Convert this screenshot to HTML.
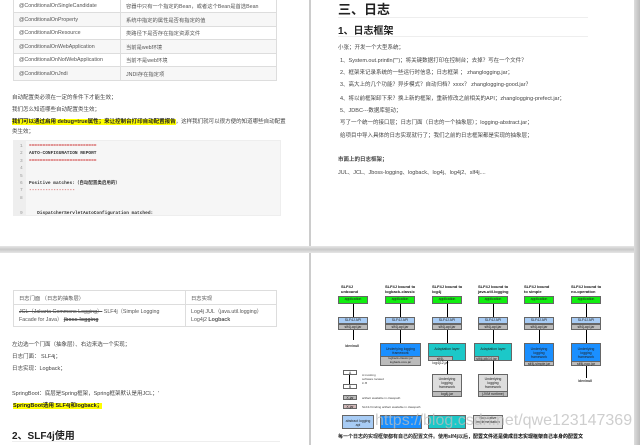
<!DOCTYPE html>
<html><head><meta charset="utf-8"><style>
*{margin:0;padding:0;box-sizing:border-box}
body{width:640px;height:445px;background:#fff;position:relative;overflow:hidden;font-family:"Liberation Sans","Noto Sans CJK SC",sans-serif;color:#333}
.a{position:absolute;white-space:nowrap}
.t{font-size:5.5px;color:#444}
table{border-collapse:collapse;position:absolute;font-size:5.3px;color:#555}
td{border:1px solid #ddd;padding:0 5px}
.hl{background:#ff0}
.box{position:absolute;font-size:3.5px;text-align:center;color:#222;border:1px solid #666;line-height:1.2}
.g{background:#1e1}
.lb{background:#a8ccf5}
.gr{background:#bbb}
.db{background:#1a8fff}
.cy{background:#1cc8c8}
.lg{background:#ddd}
.ar{position:absolute;width:1px;background:#000}
.ti{position:absolute;font-size:4px;font-weight:bold;line-height:5px;color:#111}
</style></head><body>
<div class="a" style="left:309px;top:0;width:2px;height:247px;background:#ccc"></div>
<div class="a" style="left:309px;top:252px;width:2px;height:193px;background:#ccc"></div>
<div class="a" style="left:0;top:246px;width:640px;height:7px;background:linear-gradient(#e6e6e6,#c9c9c9,#e6e6e6)"></div>
<div class="a" style="left:634px;top:0;width:6px;height:445px;background:linear-gradient(90deg,#ddd,#bbb)"></div>

<table style="left:13px;top:-1px;width:264px">
<tr style="height:13px"><td style="width:107px">@ConditionalOnSingleCandidate</td><td>容器中只有一个指定的Bean，或者这个Bean是首选Bean</td></tr>
<tr style="height:14px;background:#f7f7f7"><td>@ConditionalOnProperty</td><td>系统中指定的属性是否有指定的值</td></tr>
<tr style="height:13px"><td>@ConditionalOnResource</td><td>类路径下是否存在指定资源文件</td></tr>
<tr style="height:14px;background:#f7f7f7"><td>@ConditionalOnWebApplication</td><td>当前是web环境</td></tr>
<tr style="height:13px"><td>@ConditionalOnNotWebApplication</td><td>当前不是web环境</td></tr>
<tr style="height:14px;background:#f7f7f7"><td>@ConditionalOnJndi</td><td>JNDI存在指定项</td></tr>
</table>
<div class="a t" style="left:12px;top:93px">自动配置类必须在一定的条件下才能生效；</div>
<div class="a t" style="left:12px;top:105px">我们怎么知道哪些自动配置类生效；</div>
<div class="a t" style="left:12px;top:117px"><b class="hl" style="color:#222">我们可以通过启用 debug=true属性；来让控制台打印自动配置报告</b>，这样我们就可以很方便的知道哪些自动配置</div>
<div class="a t" style="left:12px;top:127px">类生效；</div>
<div class="a" style="left:13px;top:140px;width:268px;height:76px;background:#f6f6f6;border:1px solid #eee"></div>
<div class="a" style="left:14px;top:141px;width:12px;height:75px;background:#eee"></div>
<div class="a" style="left:20px;top:143px;font:4.5px/7.4px 'Liberation Mono',monospace;color:#999;white-space:pre">1
2
3
4
5
6
7
8

9</div>
<div class="a" style="left:29px;top:143px;font:bold 4.5px/7.4px 'Liberation Mono','Noto Sans CJK SC',monospace;color:#333;white-space:pre"><span style="color:#c33">=========================</span>
AUTO-CONFIGURATION REPORT
<span style="color:#c33">=========================</span>


Positive matches:（自动配置类启用的）
<span style="color:#c33">-----------------</span>


   DispatcherServletAutoConfiguration matched:</div>

<div class="a" style="left:338px;top:-1px;font-size:13px;font-weight:bold;color:#222">三、日志</div>
<div class="a" style="left:338px;top:17px;width:250px;height:1px;background:#eee"></div>
<div class="a" style="left:338px;top:22px;font-size:10px;font-weight:bold;color:#222">1、日志框架</div>
<div class="a" style="left:338px;top:36px;width:250px;height:1px;background:#eee"></div>
<div class="a t" style="left:338px;top:43px">小张；开发一个大型系统；</div>
<div class="a t" style="left:340px;top:56px">1、System.out.println("")；将关键数据打印在控制台；去掉？写在一个文件？</div>
<div class="a t" style="left:340px;top:68px">2、框架来记录系统的一些运行时信息；日志框架 ； zhanglogging.jar；</div>
<div class="a t" style="left:340px;top:80px">3、高大上的几个功能？异步模式？自动归档？xxxx？ zhanglogging-good.jar？</div>
<div class="a t" style="left:340px;top:94px">4、将以前框架卸下来？换上新的框架，重新修改之前相关的API；zhanglogging-prefect.jar；</div>
<div class="a t" style="left:340px;top:106px">5、JDBC---数据库驱动；</div>
<div class="a t" style="left:340px;top:118px">写了一个统一的接口层；日志门面（日志的一个抽象层）；logging-abstract.jar；</div>
<div class="a t" style="left:340px;top:131px">给项目中导入具体的日志实现就行了；我们之前的日志框架都是实现的抽象层；</div>
<div class="a t" style="left:338px;top:155px;font-weight:bold">市面上的日志框架；</div>
<div class="a t" style="left:338px;top:168px">JUL、JCL、Jboss-logging、logback、log4j、log4j2、slf4j....</div>

<table style="left:13px;top:290px;width:264px">
<tr style="height:14px"><td style="width:172px">日志门面 （日志的抽象层）</td><td>日志实现</td></tr>
<tr style="height:22px"><td style="line-height:8px"><s>JCL（Jakarta Commons Logging）</s> SLF4j（Simple Logging<br>Facade for Java） <s><b>jboss-logging</b></s></td><td style="line-height:8px">Log4j JUL（java.util.logging）<br>Log4j2 <b>Logback</b></td></tr>
</table>
<div class="a t" style="left:12px;top:340px">左边选一个门面（抽象层）、右边来选一个实现；</div>
<div class="a t" style="left:12px;top:352px">日志门面： SLF4j；</div>
<div class="a t" style="left:12px;top:364px">日志实现：Logback；</div>
<div class="a t" style="left:12px;top:389px">SpringBoot：底层是Spring框架，Spring框架默认是用JCL；'</div>
<div class="a t" style="left:13px;top:401px"><b class="hl" style="color:#222">SpringBoot选用 SLF4j和logback；</b></div>
<div class="a" style="left:12px;top:427px;font-size:10px;font-weight:bold;color:#222">2、SLF4j使用</div>
<div class="a" style="left:12px;top:441px;width:268px;height:1px;background:#eee"></div>

<div class="ti" style="left:341px;top:284px">SLF4J<br>unbound</div>
<div class="ti" style="left:385px;top:284px">SLF4J bound to<br>logback-classic</div>
<div class="ti" style="left:432px;top:284px">SLF4J bound to<br>log4j</div>
<div class="ti" style="left:478px;top:284px">SLF4J bound to<br>java.util.logging</div>
<div class="ti" style="left:524px;top:284px">SLF4J bound<br>to simple</div>
<div class="ti" style="left:571px;top:284px">SLF4J bound to<br>no-operation</div>

<div class="box g" style="left:338px;top:296px;width:30px;height:8px">application</div>
<div class="box g" style="left:385px;top:296px;width:30px;height:8px">application</div>
<div class="box g" style="left:432px;top:296px;width:30px;height:8px">application</div>
<div class="box g" style="left:478px;top:296px;width:30px;height:8px">application</div>
<div class="box g" style="left:524px;top:296px;width:30px;height:8px">application</div>
<div class="box g" style="left:571px;top:296px;width:30px;height:8px">application</div>

<div class="ar" style="left:353px;top:304px;height:13px"></div>
<div class="ar" style="left:400px;top:304px;height:13px"></div>
<div class="ar" style="left:447px;top:304px;height:13px"></div>
<div class="ar" style="left:493px;top:304px;height:13px"></div>
<div class="ar" style="left:539px;top:304px;height:13px"></div>
<div class="ar" style="left:586px;top:304px;height:13px"></div>

<div class="box lb" style="left:338px;top:317px;width:30px;height:7px">SLF4J API</div><div class="box gr" style="left:338px;top:324px;width:30px;height:6px">slf4j-api.jar</div>
<div class="box lb" style="left:385px;top:317px;width:30px;height:7px">SLF4J API</div><div class="box gr" style="left:385px;top:324px;width:30px;height:6px">slf4j-api.jar</div>
<div class="box lb" style="left:432px;top:317px;width:30px;height:7px">SLF4J API</div><div class="box gr" style="left:432px;top:324px;width:30px;height:6px">slf4j-api.jar</div>
<div class="box lb" style="left:478px;top:317px;width:30px;height:7px">SLF4J API</div><div class="box gr" style="left:478px;top:324px;width:30px;height:6px">slf4j-api.jar</div>
<div class="box lb" style="left:524px;top:317px;width:30px;height:7px">SLF4J API</div><div class="box gr" style="left:524px;top:324px;width:30px;height:6px">slf4j-api.jar</div>
<div class="box lb" style="left:571px;top:317px;width:30px;height:7px">SLF4J API</div><div class="box gr" style="left:571px;top:324px;width:30px;height:6px">slf4j-api.jar</div>

<div class="ar" style="left:353px;top:330px;height:10px"></div>
<div class="ar" style="left:400px;top:330px;height:13px"></div>
<div class="ar" style="left:447px;top:330px;height:13px"></div>
<div class="ar" style="left:493px;top:330px;height:13px"></div>
<div class="ar" style="left:539px;top:330px;height:13px"></div>
<div class="ar" style="left:586px;top:330px;height:13px"></div>
<div class="a" style="left:345px;top:344px;font-size:3.5px;font-weight:bold">/dev/null</div>

<div class="box db" style="left:380px;top:343px;width:41px;height:23px;padding-top:3px">Underlying logging framework</div>
<div class="box gr" style="left:380px;top:356px;width:41px;height:10px;font-size:3px">logback-classic.jar<br>logback-core.jar</div>
<div class="box cy" style="left:428px;top:343px;width:38px;height:18px;padding-top:3px">Adaptation layer</div>
<div class="box gr" style="left:428px;top:356px;width:25px;height:5px">slf4j-log4j12.jar</div>
<div class="box cy" style="left:474px;top:343px;width:38px;height:18px;padding-top:3px">Adaptation layer</div>
<div class="box gr" style="left:474px;top:356px;width:25px;height:5px">slf4j-jdk14.jar</div>
<div class="box db" style="left:524px;top:343px;width:30px;height:23px;padding-top:3px">Underlying logging framework</div>
<div class="box gr" style="left:524px;top:361px;width:30px;height:5px">slf4j-simple.jar</div>
<div class="box db" style="left:571px;top:343px;width:30px;height:23px;padding-top:3px">Underlying logging framework</div>
<div class="box gr" style="left:571px;top:361px;width:30px;height:5px">slf4j-nop.jar</div>

<div class="ar" style="left:447px;top:361px;height:13px"></div>
<div class="ar" style="left:493px;top:361px;height:13px"></div>
<div class="ar" style="left:586px;top:366px;height:12px"></div>
<div class="a" style="left:578px;top:379px;font-size:3.5px;font-weight:bold">/dev/null</div>
<div class="box lg" style="left:432px;top:374px;width:30px;height:23px;padding-top:2px">Underlying logging framework</div>
<div class="box gr" style="left:432px;top:391px;width:30px;height:6px">log4j.jar</div>
<div class="box lg" style="left:478px;top:374px;width:30px;height:23px;padding-top:2px">Underlying logging framework</div>
<div class="box gr" style="left:478px;top:391px;width:30px;height:6px">(JVM runtime)</div>

<div class="box" style="left:343px;top:370px;width:14px;height:5px;background:#fff">A</div>
<div class="ar" style="left:349px;top:375px;height:9px"></div>
<div class="box" style="left:343px;top:384px;width:14px;height:5px;background:#fff">B</div>
<div class="a" style="left:362px;top:373px;font-size:3px;line-height:4px;color:#444">A invoking<br>software located<br>in B</div>
<div class="box gr" style="left:343px;top:395px;width:14px;height:5px">X.jar</div>
<div class="a" style="left:362px;top:396px;font-size:3px;color:#444">artifact available in classpath</div>
<div class="box gr" style="left:343px;top:404px;width:14px;height:5px;background:#d0b8b8">X.jar</div>
<div class="a" style="left:362px;top:405px;font-size:3px;color:#444">SLF4J binding artifact available in classpath</div>

<div class="box lb" style="left:342px;top:415px;width:32px;height:14px;padding-top:3px">abstract logging api</div>
<div class="box db" style="left:380px;top:415px;width:42px;height:14px"></div>
<div class="box cy" style="left:428px;top:415px;width:38px;height:14px"></div>
<div class="box lg" style="left:473px;top:415px;width:30px;height:14px">Non-native implementation</div>

<div class="a" style="left:375px;top:412px;font-size:16px;color:rgba(190,190,190,0.75)">https://blog.csdn.net/qwe123147369</div>
<div class="a t" style="left:338px;top:433px;font-weight:bold;color:#222;font-size:5px">每一个日志的实现框架都有自己的配置文件。使用slf4j以后，<b>配置文件还是做成日志实现框架自己本身的配置文</b></div>
</body></html>
